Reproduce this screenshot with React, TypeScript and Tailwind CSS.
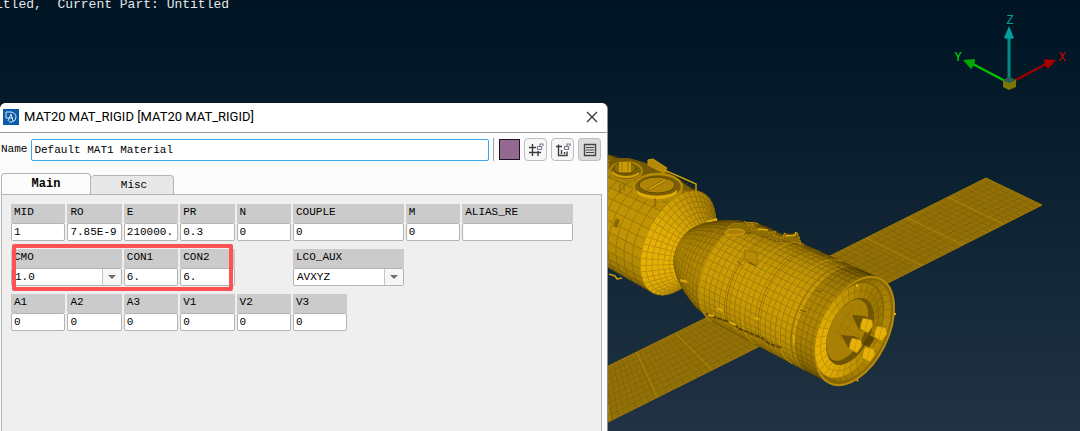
import { useState } from "react";

type Ring = { l: number; r: number };
type Point = [number, number];

// Direction of the hull axis on screen and its normal
const AXIS: Point = [0.899, 0.438];
const NORMAL: Point = [-0.438, 0.899];

const gold = (v: number) =>
  `rgb(${Math.round(240 * v)},${Math.round(184 * v)},${Math.round(6 * v)})`;

const ringPoint = (origin: Point, ring: Ring, deg: number): Point => {
  const a = (deg * Math.PI) / 180;
  const along = 0.57 * ring.r * Math.cos(a) - ring.l;
  const across = ring.r * Math.sin(a);
  return [
    origin[0] + AXIS[0] * along + NORMAL[0] * across,
    origin[1] + AXIS[1] * along + NORMAL[1] * across,
  ];
};

const toPoints = (list: Point[]) =>
  list.map((p) => `${p[0].toFixed(1)},${p[1].toFixed(1)}`).join(" ");

// Linear interpolation of the radius between profile rings
const radiusAt = (profile: Ring[], l: number) => {
  for (let i = 1; i < profile.length; i++) {
    if (l <= profile[i].l) {
      const a = profile[i - 1];
      const b = profile[i];
      return a.r + ((b.r - a.r) * (l - a.l)) / (b.l - a.l);
    }
  }
  return profile[profile.length - 1].r;
};

type MeshProps = {
  origin: Point;
  profile: Ring[];
  steps: number;
  from: number;
  to: number;
  parts: number;
  light: (deg: number, t: number) => number;
};

const Mesh = ({ origin, profile, steps, from, to, parts, light }: MeshProps) => {
  const start = profile[0].l;
  const end = profile[profile.length - 1].l;
  const cells = [];
  for (let i = steps - 1; i >= 0; i--) {
    const l1 = start + ((end - start) * i) / steps;
    const l2 = start + ((end - start) * (i + 1)) / steps;
    const near = { l: l1, r: radiusAt(profile, l1) };
    const far = { l: l2, r: radiusAt(profile, l2) };
    for (let j = 0; j < parts; j++) {
      const d1 = from + ((to - from) * j) / parts;
      const d2 = from + ((to - from) * (j + 1)) / parts;
      const v = light((d1 + d2) / 2, i / steps);
      cells.push(
        <polygon
          key={`${i}-${j}`}
          points={toPoints([
            ringPoint(origin, near, d1),
            ringPoint(origin, near, d2),
            ringPoint(origin, far, d2),
            ringPoint(origin, far, d1),
          ])}
          fill={gold(v)}
          stroke={gold(v * 0.82)}
          strokeWidth={0.5}
        />
      );
    }
  }
  return <g>{cells}</g>;
};

const hullLight = (deg: number, t: number) => {
  const s = Math.max(0, Math.sin(((deg - 86) * Math.PI) / 180));
  return 0.44 + 0.41 * Math.pow(s, 0.7) - (t < 0.15 ? 0.12 : 0);
};
const frontLight = (deg: number) => hullLight(deg, 1) - 0.04;
const domeLight = (deg: number, t: number) => {
  const s = Math.max(0, Math.sin(((deg - 82) * Math.PI) / 180));
  return 0.4 + 0.35 * s - t * 0.05;
};
const coneLight = (deg: number) => 0.8 - 0.16 * Math.cos(((deg - 330) * Math.PI) / 180);
const bowlLight = (deg: number) => 0.8 + 0.16 * Math.cos(((deg - 130) * Math.PI) / 180);
const rimLight = (deg: number) => 0.62 - 0.12 * Math.cos(((deg - 170) * Math.PI) / 180);

const lerp = (a: Point, b: Point, t: number): Point => [
  a[0] + (b[0] - a[0]) * t,
  a[1] + (b[1] - a[1]) * t,
];

type WingProps = { corners: [Point, Point, Point, Point]; cols: number; seams: number[] };

// corners: upper-inner, upper-outer, lower-outer, lower-inner
const Wing = ({ corners, cols, seams }: WingProps) => {
  const [a, b, c, d] = corners;
  const line = (p: Point, q: Point) =>
    `M${p[0].toFixed(1)} ${p[1].toFixed(1)}L${q[0].toFixed(1)} ${q[1].toFixed(1)}`;
  let grid = "";
  for (let i = 1; i < cols; i++) grid += line(lerp(a, b, i / cols), lerp(d, c, i / cols));
  for (let i = 1; i < 9; i++) grid += line(lerp(a, d, i / 9), lerp(b, c, i / 9));
  return (
    <g fill="none">
      <polygon points={toPoints(corners)} fill="#927007" stroke="#a07c06" strokeWidth="1" />
      <path d={grid} stroke="#7f6106" strokeWidth="0.7" />
      <path
        d={seams.map((s) => line(lerp(a, b, s), lerp(d, c, s))).join("")}
        stroke="#b08708"
        strokeWidth="1"
      />
    </g>
  );
};

const REAR: Point = [855, 331];
const FRONT: Point = [678, 243];

const NOZZLES: Point[] = [
  [865, 323],
  [879, 331],
  [854, 343],
  [867, 352],
];

const Spacecraft = () => (
  <g>
    <Wing
      corners={[[828, 257], [986, 178], [1042, 205], [884, 285]]}
      cols={30}
      seams={[0.24, 0.5, 0.76]}
    />
    <Wing
      corners={[[716, 313], [588, 376], [588, 432], [770, 341]]}
      cols={30}
      seams={[0.32, 0.62, 0.88]}
    />

    {/* Front module */}
    <Mesh
      origin={FRONT}
      profile={[{ l: 0, r: 56 }, { l: 95, r: 50 }]}
      steps={10}
      from={90}
      to={270}
      parts={16}
      light={frontLight}
    />
    <path d="M609 161l8-3 12 0 14 4 22 8 14 10 12 8-10 4-60-16-12-8z" fill="#765904" />
    <path
      d="M648 160l5-1 14 9-3 5-16-8z"
      fill="#b48906"
      stroke="#c79a08"
    />
    <path d="M664 170l14 6 18 8v7M609 274l6 2 2 3 5-1" fill="none" stroke="#c79a08" strokeWidth="1.5" />
    <path d="M668 174l26 13" stroke="#4d3a03" strokeWidth="1.5" strokeDasharray="2 2" />
    <ellipse cx="626" cy="171" rx="16" ry="9" fill="#7d5f04" stroke="#ac8406" strokeWidth="2" />
    <ellipse cx="625" cy="168" rx="11" ry="6" fill="#8f6e04" stroke="#5e4703" />
    <path d="M619 162h12v10h-12z" fill="#c99b07" />
    <path d="M622 162v9M628 162v9" stroke="#967304" />
    <path d="M612 172c5 6 20 7 27 1" fill="none" stroke="#d3a308" strokeWidth="2" />
    <ellipse cx="658" cy="187" rx="24" ry="13" fill="#7b5d04" stroke="#b48a07" strokeWidth="2.5" />
    <ellipse cx="657" cy="185" rx="18" ry="8" fill="#ae8506" stroke="#604903" />
    <path d="M637 190c6 7 32 8 40 0v3c-8 8-32 8-40 0z" fill="#e0ac08" />
    <path d="M647 189l18-10 3 1-18 10z" fill="#d5a408" stroke="#755905" strokeWidth="0.7" />
    <path d="M620 184v10M624 183v8M655 198v9" stroke="#806104" />
    <path d="M616 218l4 2-3 8-4-2z" fill="#8b6a04" />

    <Mesh
      origin={FRONT}
      profile={[{ l: -24, r: 27 }, { l: 0, r: 56 }]}
      steps={7}
      from={0}
      to={360}
      parts={44}
      light={coneLight}
    />
    <path d="M706 221l11-3 1 6-8 4z" fill="#e0ac08" />

    {/* Rear module: dome, hull, engine bay */}
    <Mesh
      origin={REAR}
      profile={[
        { l: 133, r: 53 },
        { l: 148, r: 49 },
        { l: 162, r: 42 },
        { l: 174, r: 34 },
        { l: 183, r: 25 },
        { l: 187, r: 16 },
      ]}
      steps={11}
      from={80}
      to={280}
      parts={24}
      light={domeLight}
    />
    <Mesh
      origin={REAR}
      profile={[{ l: 0, r: 58 }, { l: 133, r: 54 }]}
      steps={23}
      from={88}
      to={272}
      parts={24}
      light={hullLight}
    />
    {[28, 42, 66, 84, 102, 133].map((l, i) => {
      const r = radiusAt([{ l: 0, r: 58 }, { l: 133, r: 54 }], l);
      const arc: Point[] = [];
      for (let d = 90; d <= 270; d += 6) arc.push(ringPoint(REAR, { l, r }, d));
      return (
        <polyline
          key={l}
          points={toPoints(arc)}
          fill="none"
          stroke={i % 2 ? "#c99a08" : "#866604"}
          strokeWidth="0.8"
        />
      );
    })}
    {/* Antennas and handrails along the top */}
    <path
      d="M728 227l6-4 8 1 3-3 3 5 6-2-3 5 10 2 3-2 5 4 7-2-2 5 9 2 1-5 8 3 5-4 2 5 2 7-8-2-10 1-12-5-9 1-8-4-12 0-13-3z"
      fill="#8d6c05"
      stroke="#b58b08"
      strokeWidth="1"
      strokeDasharray="3 1"
    />
    <path
      d="M739 221l8 3M757 227l9-1 7 3M786 234l10-1v6M740 232l12 1M762 236l18 6M783 241l14 3M804 247l20 9M828 258l30 12M837 267l20 8"
      stroke="#54410399"
      strokeWidth="1.3"
      strokeDasharray="3 1"
      fill="none"
    />
    <path d="M758 229l10 1M785 236l10-1 1-3" stroke="#dba908" strokeWidth="1.5" fill="none" />
    <ellipse cx="735" cy="232" rx="10" ry="3" fill="#aa8106" stroke="#d4a308" />
    <path d="M745 250l12 3v12l-13-6z" fill="#b58a06" stroke="#8a6904" strokeWidth="0.7" />
    <path d="M706 314l14 5 12 4 8 6 22 9 8 6 12 4" stroke="#5b4503" strokeWidth="2" fill="none" strokeDasharray="5 1" />
    <path d="M708 315l6 1M717 308l6 3M729 322l7 3M754 318l5 1M680 280l7 2M794 335v8" stroke="#dba908" strokeWidth="2" fill="none" />
    <path d="M748 262l8 4M737 261l5 4M815 290l6 2M800 310l6 2" stroke="#705504" fill="none" />

    <g transform="rotate(26 855 331)">
      <ellipse cx="855" cy="331" rx="33" ry="58" fill="#8a6904" stroke="#b68b08" strokeWidth="2" />
    </g>
    <Mesh
      origin={REAR}
      profile={[{ l: 1, r: 55 }, { l: 5, r: 50 }]}
      steps={1}
      from={0}
      to={360}
      parts={36}
      light={rimLight}
    />
    <Mesh
      origin={[850, 331]}
      profile={[{ l: 0, r: 35 }, { l: 1, r: 51 }]}
      steps={2}
      from={0}
      to={360}
      parts={30}
      light={bowlLight}
    />
    <g transform="rotate(26 849 331)">
      <ellipse cx="850" cy="331" rx="20" ry="36" fill="#6f5504" />
      <ellipse cx="847" cy="331" rx="17" ry="33" fill="#a88006" />
    </g>
    <path d="M838 322l24 16M842 313l20 14M836 331l18 12M862 306l-22 34M854 305l-18 30" stroke="#947105" strokeWidth="0.6" />
    <path d="M852 315l13 1 7 4-7 11-6-1z" fill="#6e5304" />
    <path d="M841 335l13 1 6 3-7 11-5-3z" fill="#6e5304" />
    <path d="M869 335l6 3-6 9-6-3z" fill="#5b4503" />
    {NOZZLES.map(([x, y]) => (
      <g key={x} transform={`translate(${x} ${y})`}>
        <path d="M-2-5l9 2 1 6-5 7-8-4 1-6z" fill="#e5b009" stroke="#a88006" strokeWidth="0.7" />
        <path d="M3-4l-3 12" stroke="#c49607" strokeWidth="0.7" />
      </g>
    ))}
    <path d="M857 284v3M895 313v2M818 352v2M857 380l1 1" stroke="#e5b00a" strokeWidth="2" />
  </g>
);

const AxisTriad = () => (
  <g fontFamily="'Liberation Mono', monospace" fontSize="12" textAnchor="middle">
    <path d="M1009 82V37" stroke="#008b8b" strokeWidth="3" />
    <path d="M1009 26l5 12q-5 2-10 0z" fill="#00a0a0" />
    <path d="M1012 82l36-19" stroke="#9a0000" strokeWidth="2.5" />
    <path d="M1056 60l-12-1q0 6 4 10z" fill="#a30000" />
    <path d="M1007 82l-36-19" stroke="#00c000" strokeWidth="2.5" />
    <path d="M963 60l12-1q0 6-4 10z" fill="#00a800" />
    <path d="M1003 80l6-3 7 3v7l-7 3-6-3z" fill="#7b7600" />
    <path d="M1003 80l6-3 7 3-7 3z" fill="#255c55" />
    <text x="1010" y="24" fill="#00a0a0">Z</text>
    <text x="958" y="61" fill="#00e000">Y</text>
    <text x="1062" y="61" fill="#d00000">X</text>
  </g>
);

const LogoIcon = () => (
  <svg className="size-4 shrink-0" viewBox="0 0 16 16" fill="none" aria-hidden="true">
    <rect width="16" height="16" fill="#0a5ca8" />
    <path d="M3 9V3h5q5 1 5 5t-4 5H6M3 9h3M5 12l3-7 2 7M6 9h4" stroke="#d6e8f7" strokeWidth="1" />
  </svg>
);

const LockMark = () => (
  <path d="M13.500 8.500h4v3h-4zM16 8V6h3v2" stroke="#77808c" strokeWidth="1.200" />
);

const RenumberIcon = () => (
  <svg className="size-[23px]" viewBox="0 0 23 23" fill="none" aria-hidden="true">
    <path d="M5 9.500h7M8.500 6v12M5 14.500h12M14 13v5" stroke="#3d3d3d" strokeWidth="1.400" />
    <LockMark />
  </svg>
);

const TrashIcon = () => (
  <svg className="size-[23px]" viewBox="0 0 23 23" fill="none" aria-hidden="true">
    <path d="M5 8.500h6M7.500 6.500v11h8.500v-4M10.500 12v4M13.500 14v2" stroke="#3d3d3d" strokeWidth="1.400" />
    <LockMark />
  </svg>
);

const ListIcon = () => (
  <svg className="size-[23px]" viewBox="0 0 23 23" fill="none" aria-hidden="true">
    <path d="M6.500 6.500h11v11h-11z" stroke="#444" strokeWidth="1.400" />
    <path d="M8 9.500h8M8 12h8M8 14.500h8" stroke="#444" strokeWidth="1.200" />
  </svg>
);

type FieldProps = {
  label: string;
  value: string;
  className?: string;
  options?: string[];
};

const Field = ({ label, value, className = "", options }: FieldProps) => {
  const [current, setCurrent] = useState(value);

  return (
    <div className={`min-w-0 ${className}`}>
      <label htmlFor={label} className="block h-[19px] bg-[#cbcbcb] pl-[3px] leading-4">
        {label}
      </label>
      {options ? (
        <div className="relative">
          <select
            id={label}
            value={current}
            onChange={(e) => setCurrent(e.target.value)}
            className="block h-[18px] w-full appearance-none rounded-xs border border-[#b4b4b4] bg-white pl-[3px] leading-4 outline-none"
          >
            {options.map((option) => (
              <option key={option}>{option}</option>
            ))}
          </select>
          <span className="pointer-events-none absolute inset-y-px right-px flex w-[19px] items-center justify-center border-l border-[#c4c4c4] bg-[#f6f6f6]">
            <svg className="h-1 w-2" viewBox="0 0 8 4" aria-hidden="true">
              <path d="M0 0h8L4 4z" fill="#6e6e6e" />
            </svg>
          </span>
        </div>
      ) : (
        <input
          id={label}
          value={current}
          onChange={(e) => setCurrent(e.target.value)}
          className="block h-[18px] w-full rounded-xs border border-[#b4b4b4] bg-white pl-[2px] outline-none"
        />
      )}
    </div>
  );
};

const MaterialDialog = () => {
  const [name, setName] = useState("Default MAT1 Material");
  const [tab, setTab] = useState("Main");

  return (
    <section className="relative flex w-[608px] max-w-full flex-1 flex-col rounded-t-md border-r border-[#8c9298] bg-[#fcfcfc] font-['Liberation_Mono',monospace] text-[11px] text-black">
      <header className="flex h-[30px] items-center gap-[5px] rounded-t-md border-b border-[#9b9b9b] bg-white pr-2 pb-[2px] pl-[3px]">
        <LogoIcon />
        <h1 className="flex-1 truncate font-[Roboto,sans-serif] text-[13px] leading-5">
          MAT20 MAT_RIGID [MAT20 MAT_RIGID]
        </h1>
        <button type="button" aria-label="Close" className="p-px">
          <svg className="size-3" viewBox="0 0 12 12" aria-hidden="true">
            <path d="M1 1l10 10M11 1L1 11" stroke="#333" strokeWidth="1.200" />
          </svg>
        </button>
      </header>

      <div className="flex items-center gap-1 pt-[5px] pr-[6px] pl-px">
        <label htmlFor="material-name">Name</label>
        <input
          id="material-name"
          value={name}
          onChange={(e) => setName(e.target.value)}
          className="h-[22px] min-w-0 flex-1 rounded-xs border border-[#3fa5f0] bg-white pl-[2px] outline-none"
        />
        <span className="h-[23px] w-px bg-[#a0a0a0]" />
        <button type="button" aria-label="Colour" className="ml-px size-[21px] border border-[#1e1420] bg-[#93698f]" />
        <button type="button" aria-label="Renumber" className="rounded-sm bg-[#f7f7f7] outline outline-[#bdbdbd] -outline-offset-1">
          <RenumberIcon />
        </button>
        <button type="button" aria-label="Delete" className="rounded-sm bg-[#f7f7f7] outline outline-[#bdbdbd] -outline-offset-1">
          <TrashIcon />
        </button>
        <button type="button" aria-label="Comments" className="rounded-sm bg-[#dcdcdc] outline outline-[#bdbdbd] -outline-offset-1">
          <ListIcon />
        </button>
      </div>

      <div role="tablist" className="mt-3 flex items-end pl-px">
        {["Main", "Misc"].map((item) => (
          <button
            key={item}
            type="button"
            role="tab"
            aria-selected={tab === item}
            onClick={() => setTab(item)}
            className={
              tab === item
                ? "h-[21px] w-[90px] rounded-t-sm border border-b-0 border-[#b4b4b4] bg-[#fcfcfc] text-xs font-bold"
                : "h-[19px] w-[83px] rounded-t-sm border border-b-0 border-l-0 border-[#b4b4b4] bg-[#e8e8e8] pl-1 text-[11px]"
            }
          >
            {item}
          </button>
        ))}
      </div>

      <div className="mr-[5px] ml-px flex flex-1 flex-col gap-2 border-x border-t border-[#b4b4b4] bg-[#efefef] pt-[9px] pr-4 pb-8 pl-[9px]">
        <div className="grid max-w-[562px] grid-cols-10 gap-x-[2px]">
          <Field label="MID" value="1" />
          <Field label="RO" value="7.85E-9" />
          <Field label="E" value="210000." />
          <Field label="PR" value="0.3" />
          <Field label="N" value="0" />
          <Field label="COUPLE" value="0" className="col-span-2" />
          <Field label="M" value="0" />
          <Field label="ALIAS_RE" value="" className="col-span-2" />
        </div>
        <div className="relative grid max-w-[562px] grid-cols-10 gap-x-[2px]">
          <Field label="CMO" value="1.0" options={["1.0", "0.0", "-1.0"]} className="col-span-2" />
          <Field label="CON1" value="6." />
          <Field label="CON2" value="6." />
          <Field
            label="LCO_AUX"
            value="AVXYZ"
            options={["AVXYZ", "LCO"]}
            className="col-span-2 col-start-6"
          />
          <span className="pointer-events-none absolute -inset-y-[5px] left-px w-[221px] rounded-xs border-4 border-[#fb5254]" />
        </div>
        <div className="grid max-w-[562px] grid-cols-10 gap-x-[2px]">
          {["A1", "A2", "A3", "V1", "V2", "V3"].map((label) => (
            <Field key={label} label={label} value="0" />
          ))}
        </div>
      </div>
    </section>
  );
};

const App = () => {
  return (
    <main className="relative flex min-h-screen flex-col overflow-hidden bg-linear-to-b from-[#001423] to-[#213343]">
      <svg
        className="absolute inset-0 h-full w-full"
        viewBox="0 0 1080 431"
        preserveAspectRatio="xMaxYMin slice"
        aria-hidden="true"
      >
        <Spacecraft />
        <AxisTriad />
      </svg>
      <p className="relative mb-[94px] -ml-[5px] font-['Liberation_Mono',monospace] text-[13px] leading-[9px] whitespace-pre text-[#e4e8ea]">
        {"itled,  Current Part: Untitled"}
      </p>
      <MaterialDialog />
    </main>
  );
};

export default App;
